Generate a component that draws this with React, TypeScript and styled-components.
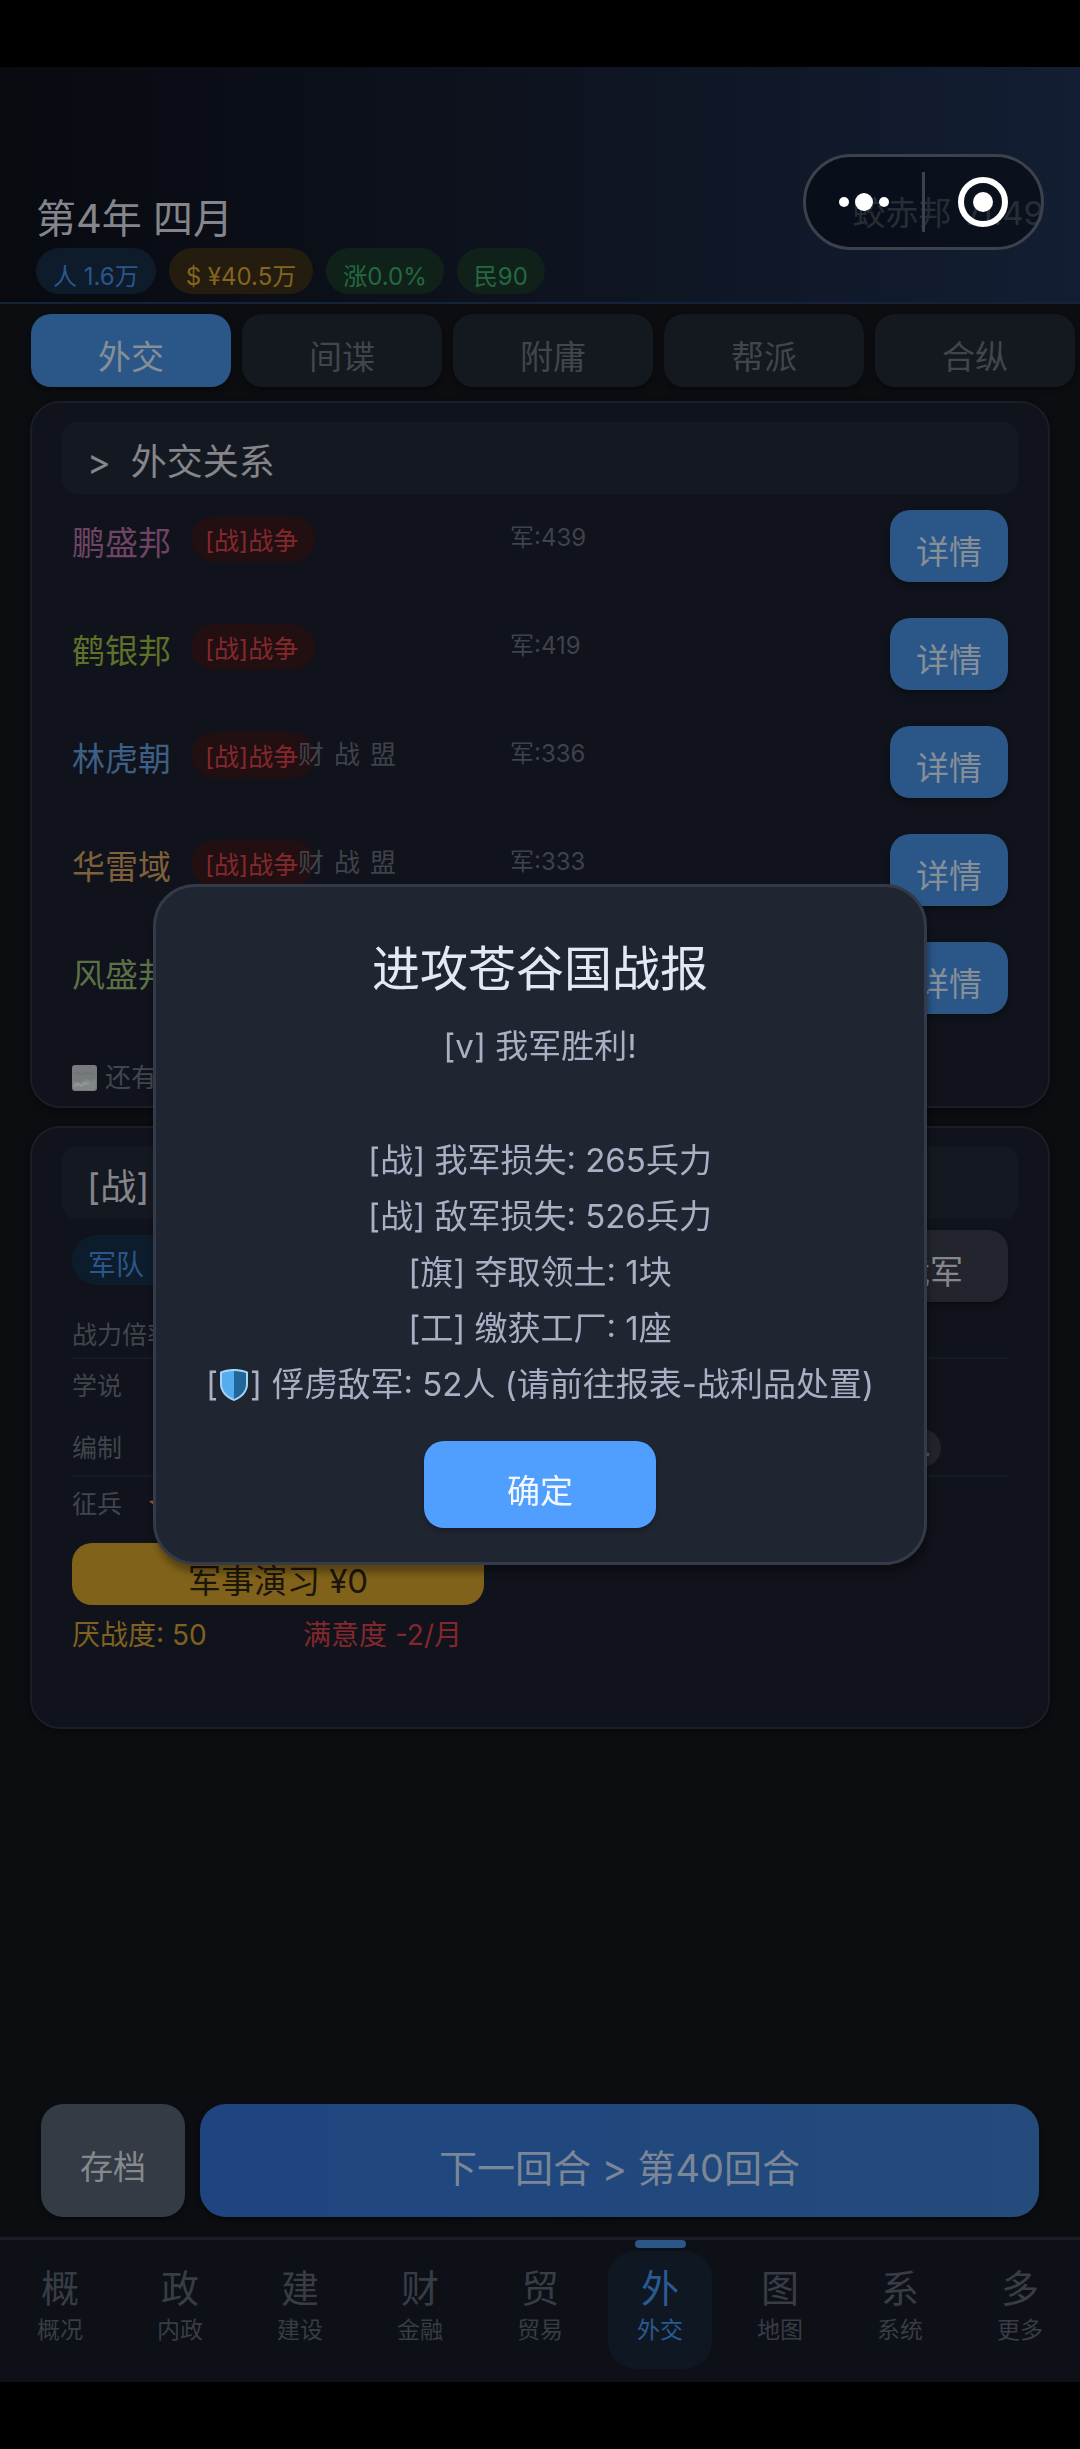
import React from "react";
import styled, { createGlobalStyle, css } from "styled-components";

const GlobalStyle = createGlobalStyle`
  * { box-sizing: border-box; }
  body {
    margin: 0;
    background: #000;
    font-family: Inter, "Noto Sans CJK SC", sans-serif;
    color: #868b94;
  }
  h1, h2, p, ul { margin: 0; padding: 0; font-weight: 400; }
  ul { list-style: none; }
  button { font-family: inherit; border: 0; margin: 0; padding: 0; cursor: pointer; }
`;

const Page = styled.div`
  min-height: 100vh;
  padding: 67px 0;
  background: #000;
  display: flex;
`;

const Screen = styled.div`
  position: relative;
  flex: 1;
  display: flex;
  flex-direction: column;
  background: #0b0d10;
`;

const Header = styled.header`
  padding: 128px 36px 8px;
  border-bottom: 2px solid #14233a;
  background: linear-gradient(90deg, #080a10 0%, #0d121d 45%, #131e33 100%);
`;

const TitleRow = styled.div`
  display: flex;
  justify-content: space-between;
  align-items: flex-start;
`;

const GameDate = styled.h1`
  font-size: 40px;
  line-height: 48px;
  color: #84868b;
`;

const Version = styled.span`
  font-size: 33px;
  line-height: 36px;
  color: #565c67;
`;

const Pills = styled.div`
  display: flex;
  gap: 13px;
  margin-top: 5px;
`;

const tones = {
  blue: { bg: "#0d1b2a", fg: "#2b568c" },
  gold: { bg: "#231c0f", fg: "#84651f" },
  green: { bg: "#10211a", fg: "#24693f" },
};

const Pill = styled.span<{ $tone: keyof typeof tones }>`
  height: 46px;
  padding: 13px 17px 0;
  border-radius: 23px;
  font-size: 24px;
  line-height: 32px;
  white-space: nowrap;
  background: ${(p) => tones[p.$tone].bg};
  color: ${(p) => tones[p.$tone].fg};
`;

const Capsule = styled.div`
  position: absolute;
  top: 87px;
  right: 36px;
  width: 241px;
  height: 96px;
  display: flex;
  align-items: center;
  border: 3px solid #3c424c;
  border-radius: 48px;
  background: rgba(4, 7, 12, 0.55);
`;

const CapsuleButton = styled.button`
  flex: 1;
  height: 90px;
  display: flex;
  align-items: center;
  justify-content: center;
  background: none;
`;

const CapsuleLine = styled.span`
  width: 3px;
  height: 60px;
  background: #3c424c;
`;

const Tabs = styled.nav`
  display: grid;
  grid-template-columns: repeat(5, 1fr);
  gap: 11px;
  padding: 10px 5px 0 31px;
`;

const raised = css`
  box-shadow: 0 3px 5px rgba(0, 0, 0, 0.35);
`;

const Tab = styled.button<{ $active?: boolean }>`
  height: 73px;
  padding-top: 12px;
  border-radius: 20px;
  font-size: 33px;
  line-height: 40px;
  background: ${(p) => (p.$active ? "#2a5788" : "#14181f")};
  color: ${(p) => (p.$active ? "#868e98" : "#41454d")};
  ${raised}
`;

const Main = styled.main`
  display: flex;
  flex-direction: column;
  gap: 18px;
  padding: 14px 30px 40px;
`;

const Card = styled.section<{ $bottom: number }>`
  padding: 19px 30px ${(p) => p.$bottom}px;
  border: 2px solid #1a1e27;
  border-radius: 30px;
  background: #10131b;
  box-shadow: 0 2px 6px rgba(0, 0, 0, 0.4);
`;

const CardTitle = styled.h2`
  display: flex;
  gap: 20px;
  height: 72px;
  padding: 18px 25px 0;
  border-radius: 14px;
  background: #141820;
  font-size: 36px;
  line-height: 44px;
  color: #84868b;
`;

const NationList = styled.ul`
  display: flex;
  flex-direction: column;
  gap: 36px;
  padding: 16px 10px 0;
`;

const Nation = styled.li`
  display: grid;
  grid-template-columns: 119px 107px 212px 1fr auto;
  height: 72px;
`;

const NationName = styled.span<{ $color: string }>`
  padding-top: 13px;
  font-size: 33px;
  line-height: 40px;
  color: ${(p) => p.$color};
`;

const WarBadge = styled.span`
  justify-self: start;
  height: 46px;
  margin-top: 6px;
  padding: 9px 17px 0 14px;
  border-radius: 23px;
  background: #210f12;
  font-size: 25px;
  line-height: 32px;
  white-space: nowrap;
  color: #84282c;
`;

const Treaties = styled.span`
  position: relative;
  display: flex;
  gap: 10px;
  padding-top: 13px;
  font-size: 26px;
  line-height: 32px;
  color: #3e424a;
`;

const Army = styled.span`
  padding-top: 12px;
  font-size: 24px;
  line-height: 32px;
  color: #3e424a;
`;

const SmallButton = styled.button<{ $muted?: boolean }>`
  height: 72px;
  padding: 12px ${(p) => (p.$muted ? 45 : 26)}px 0;
  border-radius: 20px;
  font-size: 33px;
  line-height: 40px;
  background: ${(p) => (p.$muted ? "#22252d" : "#2a5788")};
  color: ${(p) => (p.$muted ? "#85878b" : "#868e98")};
  ${raised}
`;

const MoreRow = styled.p`
  display: flex;
  align-items: center;
  gap: 8px;
  margin-top: 48px;
  padding: 0 10px;
  font-size: 26px;
  line-height: 32px;
  color: #41454d;
`;

const CardBody = styled.div`
  padding: 11px 10px 0;
`;

const ArmyHead = styled.div`
  display: flex;
  justify-content: space-between;
  align-items: flex-start;
`;

const ArmyPill = styled.span`
  width: 120px;
  height: 50px;
  margin-top: 5px;
  padding: 12px 16px 0;
  border-radius: 25px;
  background: #0c1c2b;
  font-size: 28px;
  line-height: 36px;
  color: #2b568c;
`;

const StatRow = styled.div<{ $top: number; $bottom: number; $line?: boolean }>`
  display: flex;
  align-items: center;
  gap: 27px;
  padding: ${(p) => p.$top}px 0 ${(p) => p.$bottom}px;
  border-bottom: ${(p) => (p.$line ? "2px solid #161a22" : "0")};
  font-size: 25px;
  line-height: 32px;
  color: #41454d;
`;

const StatMore = styled.button`
  height: 38px;
  margin: 0 67px 0 auto;
  padding: 0 10px;
  border-radius: 19px;
  background: #21242b;
  font-size: 24px;
  line-height: 38px;
  color: #5f6166;
`;

const DrillButton = styled.button`
  width: 412px;
  height: 62px;
  padding-top: 13px;
  border-radius: 20px;
  background: #80621a;
  font-size: 33px;
  line-height: 40px;
  color: #1c160a;
`;

const Moods = styled.div`
  display: grid;
  grid-template-columns: 231px 1fr;
  margin-top: 12px;
  font-size: 28px;
  line-height: 36px;
`;

const Mood = styled.span<{ $color: string }>`
  color: ${(p) => p.$color};
`;

const Actions = styled.div`
  display: flex;
  gap: 15px;
  margin-top: auto;
  padding: 0 41px 20px;
`;

const SaveButton = styled.button`
  width: 144px;
  height: 113px;
  padding-top: 12px;
  border-radius: 22px;
  background: #343b44;
  font-size: 33px;
  line-height: 40px;
  color: #85898e;
  ${raised}
`;

const NextButton = styled.button`
  flex: 1;
  height: 113px;
  padding-top: 15px;
  border-radius: 26px;
  background: linear-gradient(90deg, #1e4580, #244b7b);
  font-size: 38px;
  line-height: 48px;
  color: #7b8796;
  ${raised}
`;

const BottomNav = styled.nav`
  display: grid;
  grid-template-columns: repeat(9, 1fr);
  justify-items: center;
  padding: 11px 0 13px;
  border-top: 3px solid #191d25;
  background: #0d1017;
`;

const NavItem = styled.button<{ $active?: boolean }>`
  position: relative;
  display: flex;
  flex-direction: column;
  align-items: center;
  gap: 6px;
  width: 104px;
  height: 118px;
  padding-top: 15px;
  border-radius: 28px;
  background: ${(p) => (p.$active ? "#0f1822" : "none")};
  color: ${(p) => (p.$active ? "#2b5a92" : "#383c45")};
`;

const NavMark = styled.span`
  position: absolute;
  top: -11px;
  width: 51px;
  height: 8px;
  border-radius: 4px;
  background: #2a5788;
`;

const NavGlyph = styled.span`
  font-size: 38px;
  line-height: 44px;
`;

const NavLabel = styled.span`
  font-size: 23px;
  line-height: 28px;
`;

const Overlay = styled.div`
  position: fixed;
  inset: 0;
  display: flex;
  align-items: center;
  justify-content: center;
`;

const Dialog = styled.div`
  width: calc(100% - 306px);
  display: flex;
  flex-direction: column;
  align-items: center;
  padding: 50px 0 34px;
  border: 3px solid #343a4a;
  border-radius: 42px;
  background: #202532;
  box-shadow: 2px 8px 6px rgba(0, 0, 0, 0.3);
`;

const DialogTitle = styled.h2`
  font-size: 48px;
  line-height: 64px;
  color: #e2e8f6;
`;

const Report = styled.div`
  margin-top: 17px;
  text-align: center;
  font-size: 33px;
  line-height: 56px;
  white-space: nowrap;
  color: #a9b0c4;
`;

const Verdict = styled.p`
  margin-bottom: 58px;
`;

const ShieldIcon = styled.svg`
  width: 32px;
  height: 34px;
  vertical-align: -6px;
`;

const ConfirmButton = styled.button`
  width: 232px;
  height: 87px;
  margin-top: 29px;
  padding-top: 12px;
  border-radius: 20px;
  background: #509fff;
  font-size: 33px;
  line-height: 40px;
  color: #f2f7ff;
  box-shadow: 0 3px 5px rgba(0, 0, 0, 0.25);
`;

const tabs = ["外交", "间谍", "附庸", "帮派", "合纵"];

const nations = [
  { name: "鹏盛邦", color: "#6f4464", army: 439, war: true },
  { name: "鹤银邦", color: "#5f7029", army: 419, war: true },
  { name: "林虎朝", color: "#3d5f85", army: 336, war: true, treaties: ["财", "战", "盟"] },
  { name: "华雷域", color: "#80603a", army: 333, war: true, treaties: ["财", "战", "盟"] },
  { name: "风盛邦", color: "#5c7046" },
];

const navItems = [
  ["概", "概况"],
  ["政", "内政"],
  ["建", "建设"],
  ["财", "金融"],
  ["贸", "贸易"],
  ["外", "外交"],
  ["图", "地图"],
  ["系", "系统"],
  ["多", "更多"],
];

function Shield() {
  return (
    <ShieldIcon viewBox="0 0 32 34" aria-hidden="true">
      <path d="M16 1C11 1 5 2 2 4v12c0 8 6 14 14 17 8-3 14-9 14-17V4c-3-2-9-3-14-3z" fill="#a5d6f7" />
      <path d="M16 3C11 3 7 4 4 5v11c0 7 5 12 12 15z" fill="#55acee" />
      <path d="M16 3c5 0 9 1 12 2v11c0 7-5 12-12 15z" fill="#226699" />
    </ShieldIcon>
  );
}

export default function App() {
  return (
    <Page>
      <GlobalStyle />
      <Screen>
        <Header>
          <TitleRow>
            <GameDate>第4年 四月</GameDate>
            <Version>蛟赤邦 v1.49</Version>
          </TitleRow>
          <Pills>
            <Pill $tone="blue">人 1.6万</Pill>
            <Pill $tone="gold">$ ¥40.5万</Pill>
            <Pill $tone="green">涨0.0%</Pill>
            <Pill $tone="green">民90</Pill>
          </Pills>
        </Header>

        <Tabs>
          {tabs.map((t, i) => (
            <Tab key={t} $active={i === 0}>
              {t}
            </Tab>
          ))}
        </Tabs>

        <Main>
          <Card $bottom={12}>
            <CardTitle>
              <span>&gt;</span>
              <span>外交关系</span>
            </CardTitle>
            <NationList>
              {nations.map((n) => (
                <Nation key={n.name}>
                  <NationName $color={n.color}>{n.name}</NationName>
                  {n.war ? <WarBadge>[战]战争</WarBadge> : <span />}
                  <Treaties>
                    {n.treaties?.map((t) => (
                      <span key={t}>{t}</span>
                    ))}
                  </Treaties>
                  <Army>{n.army && `军:${n.army}`}</Army>
                  <SmallButton>详情</SmallButton>
                </Nation>
              ))}
            </NationList>
            <MoreRow>
              <svg width="25" height="26" viewBox="0 0 25 26" aria-hidden="true">
                <rect width="25" height="26" rx="3" fill="#777b7d" />
                <path d="M1 17c3-2 5 1 8 0s5-4 8-2 5 0 7-2v9a3 3 0 0 1-3 3H4a3 3 0 0 1-3-3z" fill="#828687" />
                <path d="M2 21l4-2 3 2 4-3 4 1" stroke="#94989a" strokeWidth="2" fill="none" />
                <path d="M3 8c6 2 12-1 19 1" stroke="#6f7476" strokeWidth="2" fill="none" />
              </svg>
              还有
            </MoreRow>
          </Card>

          <Card $bottom={74}>
            <CardTitle>[战]</CardTitle>
            <CardBody>
              <ArmyHead>
                <ArmyPill>军队</ArmyPill>
                <SmallButton $muted>裁军</SmallButton>
              </ArmyHead>
              <StatRow $top={17} $bottom={6} $line>
                战力倍率
              </StatRow>
              <StatRow $top={11} $bottom={17}>
                学说
              </StatRow>
              <StatRow $top={10} $bottom={8} $line>
                编制
                <StatMore>...</StatMore>
              </StatRow>
              <StatRow $top={11} $bottom={23}>
                征兵
                <svg width="26" height="26" viewBox="0 0 26 26" aria-hidden="true">
                  <path d="M13 1l4 8 9 1-7 6 2 9-8-5-8 5 2-9-7-6 9-1z" fill="#9a5a1c" />
                </svg>
              </StatRow>
              <DrillButton>军事演习 ¥0</DrillButton>
              <Moods>
                <Mood $color="#80611f">厌战度: 50</Mood>
                <Mood $color="#83272c">满意度 -2/月</Mood>
              </Moods>
            </CardBody>
          </Card>
        </Main>

        <Actions>
          <SaveButton>存档</SaveButton>
          <NextButton>下一回合 &gt; 第40回合</NextButton>
        </Actions>

        <BottomNav>
          {navItems.map(([glyph, label]) => (
            <NavItem key={label} $active={glyph === "外"}>
              {glyph === "外" && <NavMark />}
              <NavGlyph>{glyph}</NavGlyph>
              <NavLabel>{label}</NavLabel>
            </NavItem>
          ))}
        </BottomNav>

        <Capsule>
          <CapsuleButton aria-label="菜单">
            <svg width="52" height="20" viewBox="0 0 52 20" aria-hidden="true">
              <circle cx="6" cy="10" r="5" fill="#fff" />
              <circle cx="26" cy="10" r="9" fill="#fff" />
              <circle cx="46" cy="10" r="5" fill="#fff" />
            </svg>
          </CapsuleButton>
          <CapsuleLine />
          <CapsuleButton aria-label="关闭">
            <svg width="52" height="52" viewBox="0 0 52 52" aria-hidden="true">
              <circle cx="26" cy="26" r="22" fill="none" stroke="#fff" strokeWidth="6" />
              <circle cx="26" cy="26" r="10" fill="#fff" />
            </svg>
          </CapsuleButton>
        </Capsule>
      </Screen>

      <Overlay>
        <Dialog role="dialog" aria-modal="true" aria-labelledby="report-title">
          <DialogTitle id="report-title">进攻苍谷国战报</DialogTitle>
          <Report>
            <Verdict>[v] 我军胜利!</Verdict>
            <p>[战] 我军损失: 265兵力</p>
            <p>[战] 敌军损失: 526兵力</p>
            <p>[旗] 夺取领土: 1块</p>
            <p>[工] 缴获工厂: 1座</p>
            <p>
              [<Shield />] 俘虏敌军: 52人 (请前往报表-战利品处置)
            </p>
          </Report>
          <ConfirmButton>确定</ConfirmButton>
        </Dialog>
      </Overlay>
    </Page>
  );
}
